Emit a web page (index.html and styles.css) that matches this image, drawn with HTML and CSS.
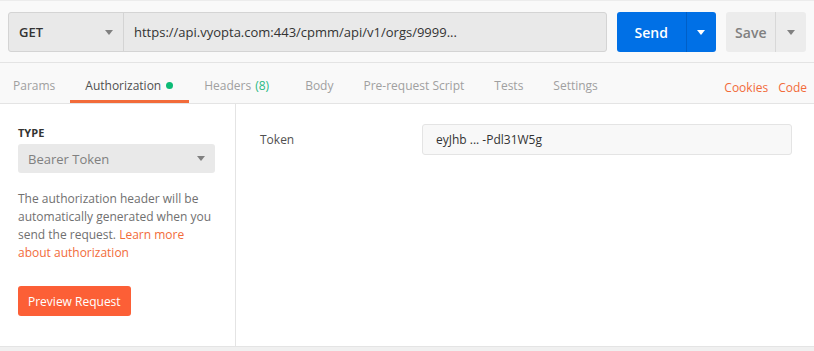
FILE: index.html
```html
<!DOCTYPE html>
<html lang="en">
<head>
  <meta charset="UTF-8" />
  <title>Request</title>
  <link rel="stylesheet" href="styles.css">
</head>
<body>
  <div class="request-bar">
    <div class="url-group">
      <div class="method">GET <span class="caret"></span></div>
      <div class="url">https://api.vyopta.com:443/cpmm/api/v1/orgs/9999...</div>
    </div>
    <div class="send-btn">
      <span class="send-label">Send</span>
      <span class="send-drop"><span class="caret light"></span></span>
    </div>
    <div class="save-btn">
      <span class="save-label">Save</span>
      <span class="save-drop"><span class="caret"></span></span>
    </div>
  </div>

  <div class="tabs">
    <div class="tab">Params</div>
    <div class="tab active">Authorization <span class="dot"></span></div>
    <div class="tab">Headers <span class="count">(8)</span></div>
    <div class="tab">Body</div>
    <div class="tab">Pre-request Script</div>
    <div class="tab">Tests</div>
    <div class="tab">Settings</div>
    <div class="tab-links">
      <span>Cookies</span>
      <span>Code</span>
    </div>
  </div>

  <div class="auth">
    <div class="auth-side">
      <div class="type-label">TYPE</div>
      <div class="type-select">Bearer Token <span class="caret"></span></div>
      <p class="help">The authorization header will be automatically generated when you send the request. <span class="link">Learn more about authorization</span></p>
      <div class="preview-btn">Preview Request</div>
    </div>
    <div class="auth-main">
      <div class="field">
        <div class="field-label">Token</div>
        <div class="field-input">eyJhb ... -Pdl31W5g</div>
      </div>
    </div>
  </div>
</body>
</html>
```

FILE: styles.css
```css
body {
  margin: 0;
  background: #f0f0f0;
  font-family: 'Open Sans', sans-serif;
  color: #505050;
}

.caret {
  display: inline-block;
  width: 0;
  height: 0;
  border-left: 4px solid transparent;
  border-right: 4px solid transparent;
  border-top: 5px solid #808080;
}

.caret.light {
  border-top-color: #ffffff;
}

.request-bar {
  display: flex;
  align-items: stretch;
  height: 40px;
  padding: 11px 8px 10px;
  background: #f9f9f9;
  border-top: 1px solid #ececec;
  border-bottom: 1px solid #e4e4e4;
}

.url-group {
  display: flex;
  width: 599px;
  border: 1px solid #d4d4d4;
  border-radius: 3px;
  background: #e9e9e9;
}

.method {
  display: flex;
  align-items: center;
  justify-content: space-between;
  width: 94px;
  padding: 0 10px 0 10px;
  border-right: 1px solid #d4d4d4;
  font-size: 13px;
  font-weight: 600;
  color: #333;
}

.url {
  display: flex;
  align-items: center;
  padding-left: 10px;
  font-size: 13px;
  color: #333;
}

.send-btn {
  display: flex;
  margin-left: 10px;
  width: 100px;
  border-radius: 3px;
  background: #0070e6;
  color: #fff;
  font-size: 14px;
  font-weight: 600;
}

.send-label {
  display: flex;
  align-items: center;
  justify-content: center;
  width: 69px;
  border-right: 1px solid #005fc7;
}

.send-drop,
.save-drop {
  display: flex;
  align-items: center;
  justify-content: center;
  flex: 1;
}

.save-btn {
  display: flex;
  margin-left: 10px;
  width: 80px;
  border-radius: 3px;
  background: #ececec;
  color: #808080;
  font-size: 14px;
  font-weight: 600;
}

.save-label {
  display: flex;
  align-items: center;
  justify-content: center;
  width: 49px;
  border-right: 1px solid #d8d8d8;
}

.tabs {
  display: flex;
  height: 40px;
  background: #f9f9f9;
  border-bottom: 1px solid #e4e4e4;
  font-size: 12px;
}

.tab {
  display: flex;
  align-items: center;
  padding: 8px 15px 0;
  height: 29px;
  color: #a0a0a0;
  border-bottom: 3px solid transparent;
}

.tab:first-child {
  padding-left: 13px;
}

.tab.active {
  color: #505050;
  border-bottom-color: #f26b3a;
  padding-right: 16px;
}

.dot {
  display: inline-block;
  width: 7px;
  height: 7px;
  margin-left: 5px;
  border-radius: 50%;
  background: #0cbb76;
}

.count {
  color: #2bba84;
  margin-left: 4px;
  padding-right: 6px;
}

.tab-links {
  display: flex;
  align-items: center;
  gap: 10px;
  margin-left: auto;
  padding: 8px 7px 0 0;
  color: #f26b3a;
}

.auth {
  display: flex;
  height: 242px;
  background: #fff;
  border-bottom: 1px solid #e4e4e4;
}

.auth-side {
  width: 197px;
  padding: 21px 20px 0 18px;
  border-right: 1px solid #e4e4e4;
}

.type-label {
  font-size: 11px;
  font-weight: 700;
  color: #333;
  margin-bottom: 4px;
}

.type-select {
  display: flex;
  align-items: center;
  justify-content: space-between;
  height: 29px;
  padding: 0 10px;
  border-radius: 3px;
  background: #e9e9e9;
  font-size: 13px;
  color: #808080;
}

.help {
  margin: 17px 0 0;
  font-size: 12px;
  line-height: 18px;
  color: #707070;
}

.link {
  color: #f26b3a;
}

.preview-btn {
  display: inline-flex;
  align-items: center;
  height: 30px;
  margin-top: 24px;
  padding: 0 10px;
  border-radius: 3px;
  background: #fc5f36;
  color: #fff;
  font-size: 12px;
}

.auth-main {
  flex: 1;
  padding: 20px 22px 0 24px;
}

.field {
  display: flex;
  align-items: center;
}

.field-label {
  width: 162px;
  font-size: 12px;
  color: #505050;
}

.field-input {
  display: flex;
  align-items: center;
  flex: 1;
  height: 29px;
  padding-left: 13px;
  border: 1px solid #e4e4e4;
  border-radius: 3px;
  background: #f8f8f8;
  font-size: 12px;
  color: #333;
}
```
